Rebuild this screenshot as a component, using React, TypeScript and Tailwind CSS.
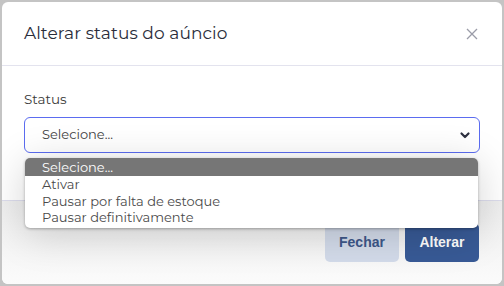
import React from "react";

export default function App() {
  const font = { fontFamily: '"Montserrat","Open Sans","Noto Sans",sans-serif' };
  return (
    <div className="w-[504px] h-[286px] bg-[#c4c4c4] p-[2px] overflow-hidden" style={font}>
      <div className="relative w-[500px] h-[282px] bg-white rounded-[6px] flex flex-col overflow-hidden">
        {/* header */}
        <div className="h-[64px] shrink-0 border-b border-[#e3e3ee] flex items-center justify-between pl-[22px] pr-[24px]">
          <h1 className="text-[17px] text-[#2a2d3a] tracking-[0.1px]" style={font}>
            Alterar status do aúncio
          </h1>
          <svg width="12" height="12" viewBox="0 0 12 12" className="mt-[1px]">
            <path d="M1 1L11 11M11 1L1 11" stroke="#9b9ca8" strokeWidth="1.3" />
          </svg>
        </div>
        {/* body */}
        <div className="h-[134px] shrink-0 px-[22px] pt-[24px]">
          <div className="text-[13.5px] text-[#3a3a3a] leading-[18px]">Status</div>
          <div className="mt-[9px] h-[36px] border border-[#5b6cf0] rounded-[6px] flex items-center justify-between pl-[17px] pr-[8px]">
            <span className="text-[13px] text-[#3f3f3f]">Selecione...</span>
            <svg width="12" height="12" viewBox="0 0 12 12">
              <path d="M2.5 4.5L6 8L9.5 4.5" stroke="#2e3140" strokeWidth="2.2" fill="none" strokeLinecap="round" strokeLinejoin="round" />
            </svg>
          </div>
        </div>
        {/* footer */}
        <div className="flex-1 border-t border-[#dcdcec] flex justify-end items-start gap-[6px] pt-[22px] pr-[23px] bg-gradient-to-b from-[#eeeeee] to-[#fbfbfb]">
          <button className="w-[74px] h-[39px] rounded-[5px] bg-[#d3dbea] text-[#3d5789] text-[14px] font-bold" style={{ fontFamily: '"Liberation Sans",Arial,sans-serif' }}>
            Fechar
          </button>
          <button className="w-[74px] h-[39px] rounded-[5px] bg-[#385a96] text-white text-[14px] font-bold" style={{ fontFamily: '"Liberation Sans",Arial,sans-serif' }}>
            Alterar
          </button>
        </div>
        {/* dropdown */}
        <div className="absolute left-[23px] top-[156px] w-[453px] bg-white rounded-[5px] shadow-[0_6px_40px_rgba(0,0,0,0.18),0_1px_3px_rgba(0,0,0,0.3)] overflow-hidden text-[13px] leading-[16.5px]">
          <div className="bg-[#767676] text-white pl-[17px] h-[18px] leading-[18px]">Selecione...</div>
          <div className="text-[#4a4a4a] pl-[17px]">Ativar</div>
          <div className="text-[#4a4a4a] pl-[17px]">Pausar por falta de estoque</div>
          <div className="text-[#4a4a4a] pl-[17px] pb-[2px]">Pausar definitivamente</div>
        </div>
      </div>
    </div>
  );
}
